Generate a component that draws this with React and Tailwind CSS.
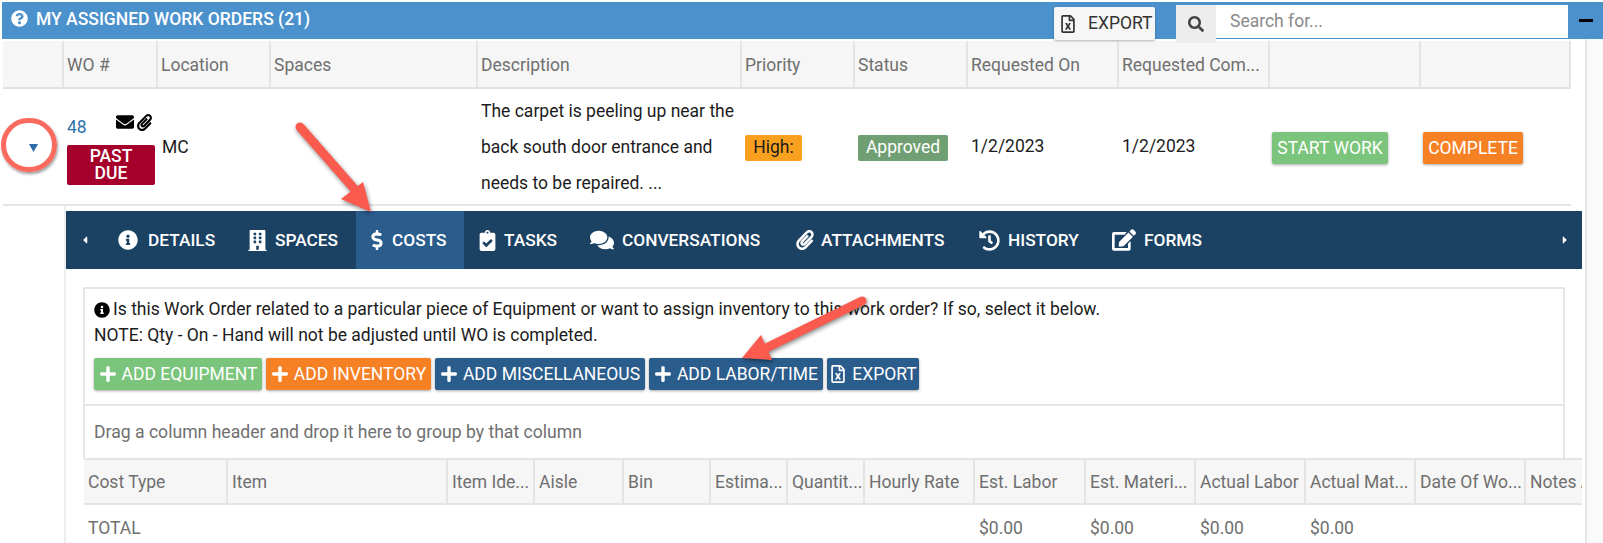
import React from 'react';
import {
  FaQuestionCircle, FaInfoCircle, FaBuilding, FaDollarSign, FaClipboardCheck, FaComments,
  FaPaperclip, FaHistory, FaEdit, FaEnvelope, FaPlus, FaSearch, FaRegFileExcel,
  FaCaretLeft, FaCaretRight,
} from 'react-icons/fa';

const mainCols = [
  { w: 'w-[61px]', label: '' },
  { w: 'w-[94px]', label: 'WO #' },
  { w: 'w-[113px]', label: 'Location' },
  { w: 'w-[207px]', label: 'Spaces' },
  { w: 'w-[264px]', label: 'Description' },
  { w: 'w-[113px]', label: 'Priority' },
  { w: 'w-[113px]', label: 'Status' },
  { w: 'w-[151px]', label: 'Requested On' },
  { w: 'w-[151px]', label: 'Requested Com...' },
  { w: 'w-[151px]', label: '' },
  { w: 'w-[150px]', label: '' },
];

const tabs = [
  { label: 'DETAILS', icon: FaInfoCircle, w: 'w-[130px] pl-[15px] gap-[10px]', size: 'text-[20px]' },
  { label: 'SPACES', icon: FaBuilding, w: 'w-[123px] pl-[14px] gap-[7px]', size: 'text-[21px]' },
  { label: 'COSTS', icon: FaDollarSign, w: 'w-[108px] pl-[11px] gap-[5px]', size: 'text-[20px]' },
  { label: 'TASKS', icon: FaClipboardCheck, w: 'w-[110px] pl-[13px] gap-[6px]', size: 'text-[21px]' },
  { label: 'CONVERSATIONS', icon: FaComments, w: 'w-[205px] pl-[16px] gap-[8px]', size: 'text-[24px]' },
  { label: 'ATTACHMENTS', icon: FaPaperclip, w: 'w-[184px] pl-[16px] gap-[6px]', size: 'text-[20px]' },
  { label: 'HISTORY', icon: FaHistory, w: 'w-[133px] pl-[16px] gap-[8px]', size: 'text-[21px]' },
  { label: 'FORMS', icon: FaEdit, w: 'w-[124px] pl-[16px] gap-[8px]', size: 'text-[24px]' },
];

const costCols = [
  ['w-[144px]', 'Cost Type', 'TOTAL'],
  ['w-[220px]', 'Item', ''],
  ['w-[87px]', 'Item Ide...', ''],
  ['w-[89px]', 'Aisle', ''],
  ['w-[87px]', 'Bin', ''],
  ['w-[77px]', 'Estima...', ''],
  ['w-[77px]', 'Quantit...', ''],
  ['w-[110px]', 'Hourly Rate', ''],
  ['w-[111px]', 'Est. Labor', '$0.00'],
  ['w-[110px]', 'Est. Materi...', '$0.00'],
  ['w-[110px]', 'Actual Labor', '$0.00'],
  ['w-[110px]', 'Actual Mat...', '$0.00'],
  ['w-[110px]', 'Date Of Wo...', ''],
  ['w-[56px]', 'Notes A', ''],
];

function ActionButton({ color, icon: Icon, children, className = '' }) {
  return (
    <button className={`flex h-8 items-center justify-center gap-[5px] rounded-[2px] text-[17.5px] leading-none text-white shadow-[0_1px_3px_rgba(0,0,0,0.35)] ${color} ${className}`}>
      {Icon && <Icon className="text-[18px]" />}
      <span className="pt-[1px]">{children}</span>
    </button>
  );
}

function Arrow({ x1, y1, x2, y2, head }) {
  return (
    <svg className="pointer-events-none absolute left-0 top-0" width="1603" height="543" viewBox="0 0 1603 543">
      <g className="drop-shadow-[1px_2px_2px_rgba(0,0,0,0.45)]">
        <line x1={x1} y1={y1} x2={x2} y2={y2} stroke="#fb5b4e" strokeWidth="9" strokeLinecap="round" />
        <polygon points={head} fill="#fb5b4e" />
      </g>
    </svg>
  );
}

export default function App() {
  return (
    <div className="relative h-[543px] w-[1603px] overflow-hidden bg-white font-['Roboto',sans-serif]">
      <div className="ml-[2px] mt-[2px] flex h-[37px] items-start bg-[#4b91cc] text-white">
        <FaQuestionCircle className="ml-[9px] mt-[8px] text-[17px]" />
        <span className="ml-[8px] mt-[9px] text-[17.5px] font-medium leading-none">MY ASSIGNED WORK ORDERS (21)</span>
        <button className="relative z-10 ml-auto mt-[5px] flex h-[33px] w-[101px] items-center rounded-[2px] bg-[#f6f6f6] pl-[4px] text-[17.5px] text-[#333] shadow-[0_1px_2px_rgba(0,0,0,0.3)]">
          <FaRegFileExcel className="ml-[1px] text-[18px]" />
          <span className="ml-[11px]">EXPORT</span>
        </button>
        <div className="relative z-10 ml-[21px] mt-[3px] flex h-[38px] w-[40px] items-center justify-center bg-[#ededed] text-[#444]">
          <FaSearch className="text-[16px]" />
        </div>
        <div className="mt-[3px] flex h-[33px] w-[352px] items-center bg-white pl-[14px] text-[17.5px] text-[#8a8a8a]">Search for...</div>
        <div className="ml-[11px] mr-[10px] mt-[17px] h-[3px] w-[14px] bg-black" />
      </div>

      <div className="flex">
        <div className="w-[1585px] pl-[3px]">
          <div className="mt-[2px] flex h-[48px] w-[1568px] border-b-2 border-[#e2e2e2] bg-[#f6f6f6]">
            {mainCols.map((col, i) => (
              <div key={i} className={`flex shrink-0 items-center truncate border-r-2 border-[#e4e4e4] pl-[3px] pt-[3px] text-[17.5px] text-[#6f6f6f] ${col.w}`}>
                {col.label}
              </div>
            ))}
          </div>

          <div className="flex h-[117px] w-[1568px] border-b-2 border-[#e6e6e6] text-[17.5px] text-[#1c1c1c]">
            <div className="flex w-[61px] items-center justify-center pr-[1px] pt-[3px]">
              <svg width="9" height="8" viewBox="0 0 9 8"><polygon points="0,0 9,0 4.5,8" fill="#2c6cab" /></svg>
            </div>
            <div className="w-[94px] pl-[3px] pt-[24px]">
              <div className="flex h-[26px] items-center">
                <span className="mt-[2px] text-[#2f70ad]">48</span>
                <FaEnvelope className="ml-[29px] mt-[-8px] text-[18px] text-black" />
                <FaPaperclip className="ml-[2px] mt-[-8px] text-[17px] text-black" />
              </div>
              <div className="mt-[6px] flex h-[40px] w-[88px] items-center justify-center rounded-[2px] bg-[#a5002b] text-center text-[17.5px] font-medium leading-[17px] text-white">
                PAST<br />DUE
              </div>
            </div>
            <div className="flex w-[113px] items-center pl-[4px] pt-[2px]">MC</div>
            <div className="w-[207px]" />
            <div className="flex w-[264px] items-center pl-[3px] pr-[6px] leading-[36px]">
              The carpet is peeling up near the back south door entrance and needs to be repaired. ...
            </div>
            <div className="flex w-[113px] items-center pl-[3px] pt-[2px]">
              <span className="flex h-[26px] w-[57px] items-center justify-center rounded-[2px] bg-[#f9a11e]">High:</span>
            </div>
            <div className="flex w-[113px] items-center pl-[3px] pt-[2px]">
              <span className="flex h-[26px] w-[90px] items-center justify-center rounded-[2px] bg-[#6f9f72] text-white">Approved</span>
            </div>
            <div className="flex w-[151px] items-center pl-[3px]">1/2/2023</div>
            <div className="flex w-[151px] items-center pl-[3px]">1/2/2023</div>
            <div className="flex w-[151px] items-center pl-[2px] pt-[3px]">
              <ActionButton color="bg-[#7bc47b]" className="w-[116px]">START WORK</ActionButton>
            </div>
            <div className="flex w-[150px] items-center pl-[2px] pt-[3px]">
              <ActionButton color="bg-[#f68024]" className="w-[100px]">COMPLETE</ActionButton>
            </div>
          </div>

          <div className="ml-[63px] mt-[5px] w-[1516px]">
            <div className="flex h-[58px] items-center bg-[#1c4263] text-[17.3px] font-medium text-white">
              <div className="flex w-[37px] items-center justify-center text-[12px]"><FaCaretLeft /></div>
              {tabs.map((tab) => (
                <div key={tab.label} className={`flex h-full shrink-0 items-center ${tab.w} ${tab.label === 'COSTS' ? 'bg-[#2a5c8c]' : ''}`}>
                  <tab.icon className={tab.size} />
                  <span className="pt-[1px] leading-none">{tab.label}</span>
                </div>
              ))}
              <div className="ml-auto flex w-[37px] items-center justify-center pl-[2px] text-[12px]"><FaCaretRight /></div>
            </div>

            <div className="ml-[17px] mt-[18px] h-[171px] w-[1482px] border-2 border-b-0 border-[#e6e6e6]">
              <div className="h-[117px] border-b-2 border-[#e6e6e6] px-[9px] pt-[8px] text-[17.5px] leading-[25px] text-[#1c1c1c]">
                <div className="flex items-center">
                  <FaInfoCircle className="mr-[3px] text-[16px] text-black" />
                  Is this Work Order related to a particular piece of Equipment or want to assign inventory to this work order? If so, select it below.
                </div>
                <div className="pt-[1px]">NOTE: Qty - On - Hand will not be adjusted until WO is completed.</div>
                <div className="mt-[10px] flex gap-[4px]">
                  <ActionButton color="bg-[#7bc47b]" icon={FaPlus} className="w-[168px]">ADD EQUIPMENT</ActionButton>
                  <ActionButton color="bg-[#f68024]" icon={FaPlus} className="w-[165px]">ADD INVENTORY</ActionButton>
                  <ActionButton color="bg-[#2a5c8c]" icon={FaPlus} className="w-[210px]">ADD MISCELLANEOUS</ActionButton>
                  <ActionButton color="bg-[#2a5c8c]" icon={FaPlus} className="w-[174px]">ADD LABOR/TIME</ActionButton>
                  <ActionButton color="bg-[#2a5c8c]" icon={FaRegFileExcel} className="w-[92px] gap-[0px]">EXPORT</ActionButton>
                </div>
              </div>
              <div className="flex h-[52px] items-center pl-[9px] text-[17.6px] text-[#6f6f6f]">
                Drag a column header and drop it here to group by that column
              </div>
            </div>

            <div className="ml-[18px] flex h-[47px] w-[1498px] border-y-2 border-[#e4e4e4] bg-[#f6f6f6]">
              {costCols.map(([w, label]) => (
                <div key={label} className={`flex shrink-0 items-center overflow-hidden whitespace-nowrap border-r-2 border-[#e4e4e4] pl-[4px] pt-[2px] text-[17.5px] text-[#6f6f6f] last:border-r-0 ${w}`}>
                  {label}
                </div>
              ))}
            </div>
            <div className="ml-[18px] flex h-[38px] w-[1498px]">
              {costCols.map(([w, label, total]) => (
                <div key={label} className={`flex shrink-0 items-center pl-[4px] pt-[9px] text-[17.5px] text-[#6f6f6f] ${w}`}>
                  {total}
                </div>
              ))}
            </div>
          </div>
        </div>

        <div className="h-[504px] w-[18px] border-l-2 border-[#e6e6e6] bg-[#fafafa]" />
      </div>

      <div className="absolute left-[64px] top-[206px] h-[337px] w-[2px] bg-[#eeeeee]" />
      <div className="absolute left-[1px] top-[118px] h-[54px] w-[56px] rounded-full border-[5px] border-[#fb6a5e] shadow-[1px_2px_3px_rgba(0,0,0,0.4)]" />
      <Arrow x1={300} y1={127} x2={357} y2={192} head="363,182 341,199 371,212" />
      <Arrow x1={862} y1={301} x2={762} y2={350} head="761,335 742,358 772,360" />
    </div>
  );
}
